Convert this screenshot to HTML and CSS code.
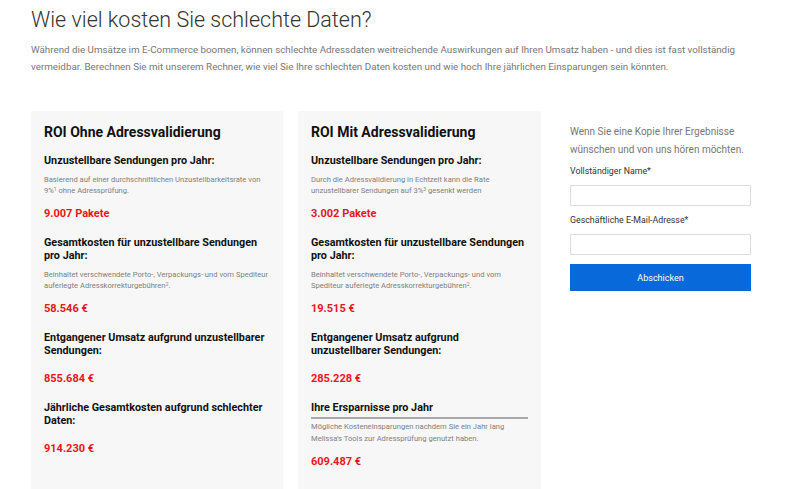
FILE: index.html
```html
<!DOCTYPE html>
<html lang="de">
<head>
<meta charset="UTF-8">
<meta name="viewport" content="width=device-width, initial-scale=1.0">
<title>ROI Rechner</title>
<link rel="stylesheet" href="styles.css">
</head>
<body>
<div class="page">
    <h1>Wie viel kosten Sie schlechte Daten?</h1>
    <p class="intro">Während die Umsätze im E-Commerce boomen, können schlechte Adressdaten weitreichende Auswirkungen auf Ihren Umsatz haben - und dies ist fast vollständig vermeidbar. Berechnen Sie mit unserem Rechner, wie viel Sie Ihre schlechten Daten kosten und wie hoch Ihre jährlichen Einsparungen sein könnten.</p>

    <div class="columns">
        <div class="card card-without">
            <h3>ROI Ohne Adressvalidierung</h3>
            <h4>Unzustellbare Sendungen pro Jahr:</h4>
            <p class="note">Basierend auf einer durchschnittlichen Unzustellbarkeitsrate von 9%<sup>1</sup> ohne Adressprüfung.</p>
            <div class="value">9.007 Pakete</div>
            <h4>Gesamtkosten für unzustellbare Sendungen pro Jahr:</h4>
            <p class="note">Beinhaltet verschwendete Porto-, Verpackungs- und vom Spediteur auferlegte Adresskorrekturgebühren<sup>2</sup>.</p>
            <div class="value">58.546 €</div>
            <h4>Entgangener Umsatz aufgrund unzustellbarer Sendungen:</h4>
            <div class="value">855.684 €</div>
            <h4>Jährliche Gesamtkosten aufgrund schlechter Daten:</h4>
            <div class="value">914.230 €</div>
        </div>

        <div class="card card-with">
            <h3>ROI Mit Adressvalidierung</h3>
            <h4>Unzustellbare Sendungen pro Jahr:</h4>
            <p class="note">Durch die Adressvalidierung in Echtzeit kann die Rate unzustellbarer Sendungen auf 3%<sup>3</sup> gesenkt werden</p>
            <div class="value">3.002 Pakete</div>
            <h4>Gesamtkosten für unzustellbare Sendungen pro Jahr:</h4>
            <p class="note">Beinhaltet verschwendete Porto-, Verpackungs- und vom Spediteur auferlegte Adresskorrekturgebühren<sup>2</sup>.</p>
            <div class="value">19.515 €</div>
            <h4>Entgangener Umsatz aufgrund unzustellbarer Sendungen:</h4>
            <div class="value">285.228 €</div>
            <h4 class="savings">Ihre Ersparnisse pro Jahr</h4>
            <p class="note note-savings">Mögliche Kosteneinsparungen nachdem Sie ein Jahr lang Melissa's Tools zur Adressprüfung genutzt haben.</p>
            <div class="value">609.487 €</div>
        </div>

        <div class="contact">
            <p class="contact-text">Wenn Sie eine Kopie Ihrer Ergebnisse wünschen und von uns hören möchten.</p>
            <form class="contact-form">
                <label for="fullname">Vollständiger Name*</label>
                <input type="text" id="fullname" name="fullname">
                <label for="email">Geschäftliche E-Mail-Adresse*</label>
                <input type="email" id="email" name="email">
                <button type="submit">Abschicken</button>
            </form>
        </div>
    </div>
</div>
</body>
</html>
```

FILE: styles.css
```css
/* Basic styling */
body {
    font-family: Roboto, "Liberation Sans", Arial, sans-serif;
    margin: 0;
    padding: 0;
    background-color: #fff;
    color: #222;
}
.page {
    width: 738px;
    padding: 6px 0 0 31px;
}
h1 {
    margin: 0;
    font-size: 21.5px;
    font-weight: 300;
    line-height: 28px;
    color: #333;
}
.intro {
    margin: 7px 0 0;
    font-size: 9.8px;
    line-height: 17px;
    color: #777;
}

/* three columns */
.columns {
    display: flex;
    align-items: stretch;
    gap: 15px;
    margin-top: 36px;
}
.card {
    background-color: #f7f7f7;
    padding: 11px 13px 40px;
}
.card-without {
    width: 226px;
}
.card-with {
    width: 217px;
}
.card h3 {
    margin: 0;
    font-size: 14px;
    font-weight: 700;
    line-height: 20px;
    color: #111;
}
.card h4 {
    margin: 15px 0 0;
    font-size: 10.8px;
    font-weight: 700;
    line-height: 13px;
    color: #111;
}
.card h3 + h4 {
    margin-top: 12px;
}
.note {
    margin: 7px 0 0;
    font-size: 7.6px;
    line-height: 11px;
    color: #808080;
}
.note sup {
    font-size: 5px;
    line-height: 1;
    vertical-align: 2px;
}
.value {
    margin-top: 11px;
    font-size: 11px;
    font-weight: 700;
    line-height: 14px;
    color: #e8161b;
}
.card h4 + .value {
    margin-top: 15px;
}
.card h4.savings {
    padding-bottom: 3px;
    border-bottom: 2px solid #a9a9a9;
}
.note-savings {
    margin-top: 2px;
    line-height: 12px;
}
.note-savings + .value {
    margin-top: 10px;
}

/* contact form */
.contact {
    width: 181px;
    margin-left: 14px;
    padding-top: 12px;
}
.contact-text {
    margin: 0;
    font-size: 10px;
    line-height: 18px;
    color: #777;
}
.contact-form label {
    display: block;
    margin-top: 6px;
    font-size: 8.8px;
    line-height: 12px;
    color: #333;
}
.contact-form input {
    display: block;
    box-sizing: border-box;
    width: 100%;
    height: 21px;
    margin: 8px 0 0;
    border: 1px solid #ddd;
    background: #fff;
}
.contact-form input + label {
    margin-top: 8px;
}
.contact-form button {
    display: block;
    width: 100%;
    height: 27px;
    margin-top: 9px;
    border: none;
    background-color: #0869db;
    color: #fff;
    font-family: inherit;
    font-size: 9px;
    cursor: pointer;
}
```
